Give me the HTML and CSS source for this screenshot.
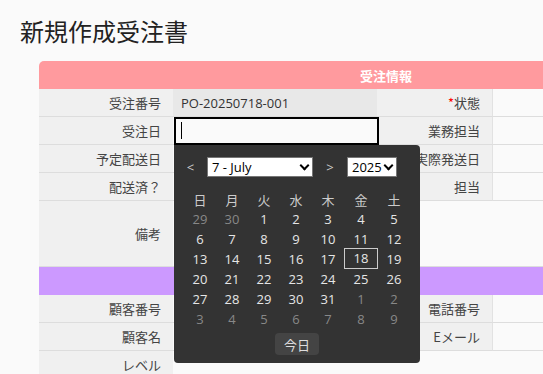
FILE: index.html
```html
<!DOCTYPE html>
<html lang="ja">
<head>
    <meta charset="UTF-8">
    <title>新規作成受注書</title>
    <link rel="stylesheet" href="styles.css">
</head>
<body>
<h1 class="pageTitle">新規作成受注書</h1>

<table class="orderForm">
    <colgroup>
        <col class="colLabel">
        <col class="colValue">
        <col class="colLabel2">
        <col class="colValue2">
    </colgroup>
    <tr>
        <th colspan="4" class="sectionHead orderHead">受注情報</th>
    </tr>
    <tr>
        <td class="label">受注番号</td>
        <td class="value readonly">PO-20250718-001</td>
        <td class="label"><span class="required">*</span>状態</td>
        <td class="value lastCol"></td>
    </tr>
    <tr>
        <td class="label">受注日</td>
        <td class="value dateCell">
            <input class="dateInput" id="orderDate" value="">
            <span class="caret"></span>
            <div class="calendar">
                <div class="calNav">
                    <span class="navBtn">&lt;</span>
                    <span class="selectWrap monthWrap">
                        <select class="monthSelect">
                            <option>7 - July</option>
                        </select>
                    </span>
                    <span class="navBtn">&gt;</span>
                    <span class="selectWrap yearWrap">
                        <select class="yearSelect">
                            <option>2025</option>
                        </select>
                    </span>
                </div>
                <div class="calGrid" id="calGrid"></div>
                <div class="calFoot">
                    <button class="todayBtn">今日</button>
                </div>
            </div>
        </td>
        <td class="label">業務担当</td>
        <td class="value lastCol"></td>
    </tr>
    <tr>
        <td class="label">予定配送日</td>
        <td class="value"></td>
        <td class="label">実際発送日</td>
        <td class="value lastCol"></td>
    </tr>
    <tr>
        <td class="label">配送済？</td>
        <td class="value"></td>
        <td class="label">担当</td>
        <td class="value lastCol"></td>
    </tr>
    <tr>
        <td class="label memoRow">備考</td>
        <td class="value" colspan="3"></td>
    </tr>
    <tr>
        <th colspan="4" class="sectionHead customerHead">顧客情報</th>
    </tr>
    <tr>
        <td class="label">顧客番号</td>
        <td class="value"></td>
        <td class="label">電話番号</td>
        <td class="value lastCol"></td>
    </tr>
    <tr>
        <td class="label">顧客名</td>
        <td class="value"></td>
        <td class="label">Eメール</td>
        <td class="value lastCol"></td>
    </tr>
    <tr>
        <td class="label">レベル</td>
        <td class="value" colspan="3"></td>
    </tr>
</table>

<script>
    // 2025年7月のカレンダーを作る
    function buildCalendar() {
        const grid = document.getElementById('calGrid');
        const week = ['日', '月', '火', '水', '木', '金', '土'];
        week.forEach(function (w) {
            const cell = document.createElement('div');
            cell.className = 'weekName';
            cell.textContent = w;
            grid.appendChild(cell);
        });

        const year = 2025, month = 6, today = 18;
        const first = new Date(year, month, 1).getDay();
        const start = new Date(year, month, 1 - first);
        for (let i = 0; i < 42; i++) {
            const d = new Date(start.getFullYear(), start.getMonth(), start.getDate() + i);
            const cell = document.createElement('div');
            cell.className = 'day';
            if (d.getMonth() !== month) {
                cell.className += ' otherMonth';
            }
            const num = document.createElement('span');
            num.textContent = d.getDate();
            if (d.getMonth() === month && d.getDate() === today) {
                num.className = 'today';
            }
            cell.appendChild(num);
            grid.appendChild(cell);
        }
    }

    buildCalendar();
</script>
</body>
</html>
```

FILE: styles.css
```css
html, body {
    margin: 0;
    overflow: hidden;
}

body {
    background: #fafafa;
    color: #333;
    font-family: "Open Sans", "Noto Sans CJK JP", sans-serif;
    font-size: 13px;
}

.pageTitle {
    margin: 0;
    padding: 15px 0 0 20px;
    font-family: "Noto Sans CJK JP", sans-serif;
    font-size: 24px;
    font-weight: normal;
    line-height: 32px;
    color: #222;
}

.orderForm {
    margin: 14px 0 0 39px;
    width: 694px;
    table-layout: fixed;
    border-collapse: separate;
    border-spacing: 0;
}

.colLabel { width: 134px; }
.colValue { width: 204px; }
.colLabel2 { width: 115px; }
.colValue2 { width: 241px; }

.orderForm td {
    height: 27px;
    padding: 0;
    border-bottom: 1px solid #ddd;
    font-family: "Open Sans", "Noto Sans CJK JP", sans-serif;
}

.sectionHead {
    height: 28px;
    padding: 0;
    color: #fff;
    font-family: "Noto Sans CJK JP", sans-serif;
    font-size: 13px;
    font-weight: bold;
    text-align: center;
}

.orderHead {
    background: #ff9a9e;
    border-radius: 5px 5px 0 0;
}

.customerHead {
    background: #cc99ff;
}

.label {
    background: #f0f0f0;
    color: #444;
    text-align: right;
    padding-right: 12px !important;
    font-family: "Noto Sans CJK JP", sans-serif !important;
    white-space: nowrap;
}

.required {
    color: #f00;
}

.memoRow {
    height: 65px !important;
}

.value {
    background: #fafafa;
    padding-left: 8px !important;
    color: #333;
}

.readonly {
    background: #e8e8e8;
}

.lastCol {
    border-left: 1px solid #e2e2e2;
}

.dateCell {
    position: relative;
    padding-left: 0 !important;
}

.dateInput {
    display: block;
    box-sizing: border-box;
    width: 205px;
    height: 28px;
    margin: 0 0 -1px 1px;
    border: 2px solid #000;
    background: #fafafa;
    outline: none;
}

.caret {
    position: absolute;
    left: 8px;
    top: 5px;
    width: 1px;
    height: 17px;
    background: #000;
}

.calendar {
    position: absolute;
    left: 1px;
    top: 28px;
    z-index: 10;
    width: 246px;
    padding: 12px 0 8px;
    background: #333;
    border-radius: 0 4px 4px 4px;
    font-family: "Open Sans", "Noto Sans CJK JP", sans-serif;
    font-size: 13px;
}

.calNav {
    display: flex;
    align-items: center;
    height: 20px;
}

.navBtn {
    width: 33px;
    text-align: center;
    color: #ccc;
}

.selectWrap + .navBtn {
    width: 34px;
}

.selectWrap {
    position: relative;
    display: block;
    height: 20px;
}

.selectWrap::after {
    content: "";
    position: absolute;
    top: 5px;
    right: 5px;
    width: 5px;
    height: 5px;
    border-right: 2px solid #000;
    border-bottom: 2px solid #000;
    transform: rotate(45deg);
    pointer-events: none;
}

.monthSelect, .yearSelect {
    display: block;
    box-sizing: border-box;
    height: 20px;
    padding: 0 14px 0 4px;
    border: 1px solid #767676;
    border-radius: 0;
    background: #fff;
    color: #000;
    font-family: "Open Sans", sans-serif;
    font-size: 13px;
    -webkit-appearance: none;
    appearance: none;
}

.monthSelect {
    width: 106px;
}

.yearSelect {
    width: 50px;
}

.calGrid {
    display: grid;
    grid-template-columns: repeat(7, 1fr);
    grid-auto-rows: 20px;
    width: 226px;
    margin: 12px 0 0 10px;
}

.weekName, .day {
    display: flex;
    align-items: center;
    justify-content: center;
}

.weekName {
    color: #ccc;
    font-family: "Noto Sans CJK JP", sans-serif;
}

.day {
    color: #e6e6e6;
}

.otherMonth {
    color: #888;
}

.today {
    display: flex;
    align-items: center;
    justify-content: center;
    flex: none;
    box-sizing: border-box;
    width: 34px;
    height: 21px;
    margin-top: -2px;
    border: 1px solid #ccc;
}

.calFoot {
    margin-top: 4px;
    text-align: center;
}

.todayBtn {
    width: 44px;
    height: 22px;
    padding: 0;
    border: none;
    border-radius: 4px;
    background: #444;
    color: #ddd;
    font-family: "Noto Sans CJK JP", sans-serif;
    font-size: 13px;
}
```
